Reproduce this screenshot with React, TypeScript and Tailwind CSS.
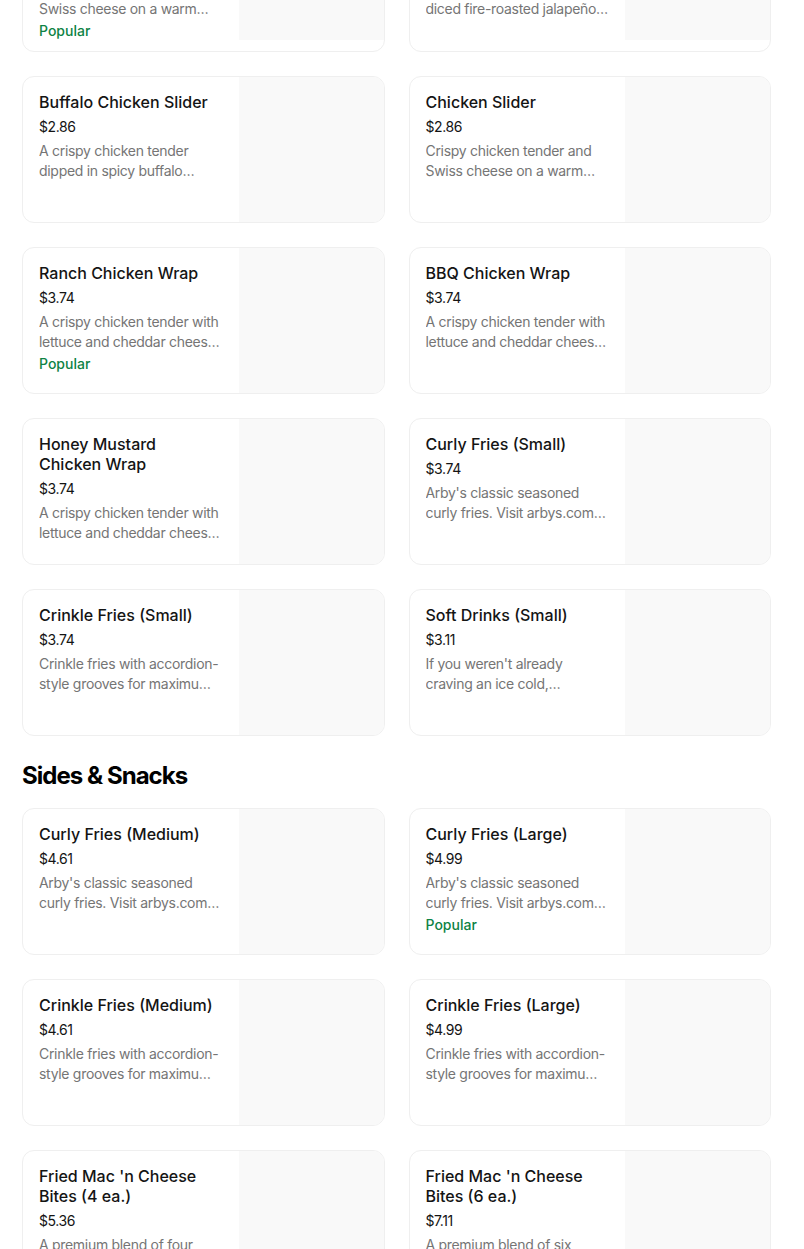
import React from 'react';

type Item = {
  name: string;
  price: string;
  desc: string;
  popular?: boolean;
};

const topRow: Item[] = [
  {
    name: "Ham 'n Swiss Cheese Slider Classic",
    price: '$2.86',
    desc: 'Sliced roast ham and melted Swiss cheese on a warm toasted slider bun.',
    popular: true,
  },
  {
    name: 'Jalapeño Roast Beef Slider',
    price: '$2.86',
    desc: 'Roast beef, pepper jack and diced fire-roasted jalapeños on a warm slider bun.',
  },
];

const mainItems: Item[] = [
  {
    name: 'Buffalo Chicken Slider',
    price: '$2.86',
    desc: 'A crispy chicken tender dipped in spicy buffalo sauce with ranch on a warm slider bun.',
  },
  {
    name: 'Chicken Slider',
    price: '$2.86',
    desc: 'Crispy chicken tender and Swiss cheese on a warm toasted slider bun.',
  },
  {
    name: 'Ranch Chicken Wrap',
    price: '$3.74',
    desc: 'A crispy chicken tender with lettuce and cheddar cheese and ranch in a warm tortilla.',
    popular: true,
  },
  {
    name: 'BBQ Chicken Wrap',
    price: '$3.74',
    desc: 'A crispy chicken tender with lettuce and cheddar cheese and BBQ sauce in a warm tortilla.',
  },
  {
    name: 'Honey Mustard Chicken Wrap',
    price: '$3.74',
    desc: 'A crispy chicken tender with lettuce and cheddar cheese and honey mustard in a warm tortilla.',
  },
  {
    name: 'Curly Fries (Small)',
    price: '$3.74',
    desc: "Arby's classic seasoned curly fries. Visit arbys.com for nutrition information.",
  },
  {
    name: 'Crinkle Fries (Small)',
    price: '$3.74',
    desc: 'Crinkle fries with accordion-style grooves for maximum crunch and flavor.',
  },
  {
    name: 'Soft Drinks (Small)',
    price: '$3.11',
    desc: "If you weren't already craving an ice cold, refreshing soft drink, you are now.",
  },
];

const sides: Item[] = [
  {
    name: 'Curly Fries (Medium)',
    price: '$4.61',
    desc: "Arby's classic seasoned curly fries. Visit arbys.com for nutrition information.",
  },
  {
    name: 'Curly Fries (Large)',
    price: '$4.99',
    desc: "Arby's classic seasoned curly fries. Visit arbys.com for nutrition information.",
    popular: true,
  },
  {
    name: 'Crinkle Fries (Medium)',
    price: '$4.61',
    desc: 'Crinkle fries with accordion-style grooves for maximum crunch and flavor.',
  },
  {
    name: 'Crinkle Fries (Large)',
    price: '$4.99',
    desc: 'Crinkle fries with accordion-style grooves for maximum crunch and flavor.',
  },
  {
    name: "Fried Mac 'n Cheese Bites (4 ea.)",
    price: '$5.36',
    desc: 'A premium blend of four cheeses mixed with macaroni, breaded and fried.',
  },
  {
    name: "Fried Mac 'n Cheese Bites (6 ea.)",
    price: '$7.11',
    desc: 'A premium blend of six cheeses mixed with macaroni, breaded and fried.',
  },
];

const MenuCard = ({ item }: { item: Item }) => (
  <div className="flex rounded-xl border border-[#efefef] bg-white overflow-hidden">
    <div className="flex-1 min-w-0 pl-4 pr-4 pt-[15px] pb-[10px]">
      <div className="pr-1 text-base leading-5 font-medium text-[#141414]">{item.name}</div>
      <div className="mt-[5px] text-sm leading-5 tracking-[-0.4px] text-[#141414]">{item.price}</div>
      <div className="mt-1 text-sm leading-5 tracking-[-0.3px] text-[#757575] line-clamp-2">{item.desc}</div>
      {item.popular && (
        <div className="mt-0.5 text-sm leading-5 font-medium text-[#0e8345]">Popular</div>
      )}
    </div>
    <div className="w-[145px] h-[145px] shrink-0 bg-[#f9f9f9]" />
  </div>
);

const Grid = ({ items }: { items: Item[] }) => (
  <div className="grid grid-cols-2 gap-6">
    {items.map((item) => (
      <MenuCard key={item.name} item={item} />
    ))}
  </div>
);

export default function App() {
  return (
    <div
      className="min-h-screen bg-white overflow-hidden"
      style={{ fontFamily: 'Inter, "Noto Sans", sans-serif' }}
    >
      <div className="ml-[22px] w-[749px] -mt-[106px]">
        <div className="flex flex-col gap-6">
          <Grid items={topRow} />
          <Grid items={mainItems} />
        </div>
        <h2 className="mt-6 mb-4 text-2xl leading-8 font-bold tracking-[-0.04em] text-black">
          Sides &amp; Snacks
        </h2>
        <Grid items={sides} />
        <div className="h-10" />
      </div>
    </div>
  );
}
